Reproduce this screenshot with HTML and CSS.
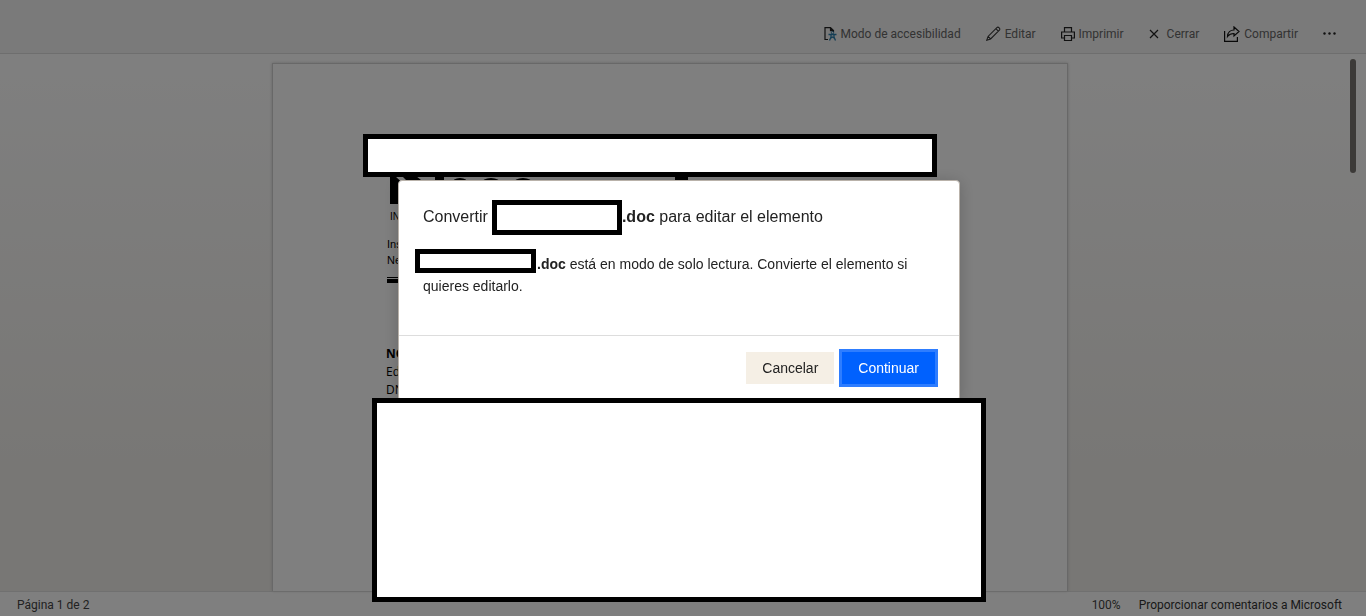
FILE: index.html
```
<!DOCTYPE html>
<html lang="es">
<head>
<meta charset="utf-8">
<meta name="viewport" content="width=device-width, initial-scale=1">
<title>Documento</title>
<link rel="stylesheet" href="styles.css">
</head>
<body>
<div class="viewer">
  <header class="toolbar">
    <button class="tool" type="button">
      <svg width="13" height="14" viewBox="0 0 13 14" fill="none"><path d="M4 12.500H1V.6h5.500L9.500 3.500V5M6.500.6v3h3" stroke="#222" stroke-width="1.200"/><circle cx="8.500" cy="5.700" r="1.200" stroke="#2b7dab"/><path d="M4.500 7.500h8M7 8v2L5.500 13.500M10 8v2l1.500 3.500M7 11l1.500-1 1.500 1" stroke="#2b7dab" stroke-width="1.300"/></svg>
      Modo de accesibilidad
    </button>
    <button class="tool" type="button">
      <svg width="15" height="15" viewBox="0 0 16 16" fill="none" stroke="#333" stroke-width="1.100"><path d="M.8 15.200l1.400-4.100 9.400-9.400c1.500-1.500 4.200 1.200 2.700 2.700l-9.400 9.400zM10.500 2.800l2.700 2.700M2.200 11.100l2.700 2.700"/></svg>
      Editar
    </button>
    <button class="tool" type="button">
      <svg width="14" height="14" viewBox="0 0 14 14" fill="none" stroke="#222" stroke-width="1.200"><path d="M3.500 5V.6h7V5M3.500 11H.6V5h12.800v6h-2.900M3.500 8.500h7v5h-7z"/></svg>
      Imprimir
    </button>
    <button class="tool" type="button">
      <svg class="close" width="10" height="10" viewBox="0 0 10 10" fill="none" stroke="#222" stroke-width="1.200"><path d="M1 1l8 8M9 1L1 9"/></svg>
      Cerrar
    </button>
    <button class="tool" type="button">
      <svg width="16" height="16" viewBox="0 0 16 16" fill="none" stroke="#111" stroke-width="1.200"><path d="M.6 5v10.400h12.800V11M10 1l5 4.500-5 4.500V7.500C7 7.500 5 8.500 3.500 10.500c.2-4 3-6.500 6.500-6.500z"/></svg>
      Compartir
    </button>
    <button class="tool more" type="button" aria-label="Más opciones">
      <svg width="13" height="3" viewBox="0 0 13 3" fill="#222"><circle cx="1.500" cy="1.500" r="1.200"/><circle cx="6.500" cy="1.500" r="1.200"/><circle cx="11.500" cy="1.500" r="1.200"/></svg>
    </button>
  </header>

  <main class="canvas">
    <article class="sheet">
      <svg class="logo" width="298" height="28" viewBox="0 0 298 28"><path d="M0 0h5l13 12V28H0zM12 0h14l10 8H20zM45 0h9v8h-9zM61 8q2-6 9-6t9 6zM90 8q3-6 11-6t11 6zM122 8q3-6 11-6t11 6zM285 0h13v8h-13z"/></svg>
      <p class="institution">IN</p>
      <p class="issuer">Ins<br>Ne</p>
      <hr class="rule">
      <p class="person"><b>NO</b><br>Ed<br>DN</p>
    </article>
    <div class="thumb"></div>
  </main>

  <footer class="status">
    <span>Página 1 de 2</span>
    <span class="zoom">100%</span>
    <a class="feedback" href="#">Proporcionar comentarios a Microsoft</a>
  </footer>
</div>

<div class="overlay">
  <section class="dialog" role="dialog" aria-modal="true" aria-labelledby="dialog-title">
    <div class="content">
      <h1 class="title" id="dialog-title"><span class="words">Convertir</span><span class="mask mask-title"></span><span class="words"><b>.doc</b> para editar el elemento</span></h1>
      <p class="message"><span class="mask mask-name"></span><b>.doc</b> está en modo de solo lectura. Convierte el elemento si quieres editarlo.</p>
    </div>
    <div class="actions">
      <button class="btn" type="button">Cancelar</button>
      <button class="btn primary" type="button">Continuar</button>
    </div>
    <div class="mask mask-top"></div>
    <div class="mask mask-bottom"></div>
  </section>
</div>
</body>
</html>
```
FILE: styles.css
```
* {
  box-sizing: border-box;
}

body {
  margin: 0;
  font-family: Roboto, "Open Sans", sans-serif;
  font-size: 12px;
  color: #444;
}

.viewer {
  display: flex;
  flex-direction: column;
  height: 100vh;
  overflow: hidden;
}

.toolbar {
  display: flex;
  align-items: center;
  justify-content: flex-end;
  gap: 25px;
  padding: 20px 30px 6px;
  min-height: 54px;
  background: #f4f4f4;
  border-bottom: 1px solid #dcdcdc;
  box-shadow: 0 1px 2px #d8d8d8;
}

.tool {
  display: flex;
  align-items: center;
  gap: 4px;
  padding: 0;
  border: 0;
  background: none;
  font: inherit;
  line-height: 16px;
  color: #666;
}

.close {
  margin-right: 4px;
}

.canvas {
  display: flex;
  justify-content: center;
  position: relative;
  flex: 1;
  min-height: 0;
  padding: 9px 26px 0 0;
  background: linear-gradient(#ffffff, #f0eeea 80%);
}

.sheet {
  width: 796px;
  padding: 112px 113px 0;
  background: #fff;
  border: 1px solid #d0d0d0;
  border-bottom: 0;
  box-shadow: 0 0 3px #ccc;
  color: #000;
}

.sheet p {
  margin: 0;
}

.logo {
  display: block;
  margin-left: 4px;
}

.institution {
  padding: 5px 0 0 4px;
  font: 10px/16px "Liberation Sans", Arial, sans-serif;
}

.issuer {
  padding: 11px 0 0 1px;
  font: 11px/16px "Liberation Sans", Arial, sans-serif;
}

.rule {
  height: 6px;
  margin: 9px 0 0 1px;
  border: solid #000;
  border-width: 1px 0 4px;
}

.person {
  padding-top: 62px;
  font-family: "Open Sans", "Noto Sans", sans-serif;
  line-height: 18px;
}

.thumb {
  position: absolute;
  top: 5px;
  right: 10px;
  width: 6px;
  height: 114px;
  border-radius: 3px;
  background: #787470;
}

.status {
  display: flex;
  align-items: center;
  gap: 18px;
  padding: 5px 24px 3px 17px;
  border-top: 1px solid #e0e0e0;
  background: #fff;
  line-height: 16px;
}

.zoom {
  margin-left: auto;
}

.feedback {
  color: #333;
  text-decoration: none;
}

.overlay {
  position: fixed;
  inset: 0;
  display: flex;
  justify-content: center;
  align-items: flex-start;
  padding: 180px 8px 0 0;
  background: rgba(0, 0, 0, 0.5);
}

.dialog {
  position: relative;
  width: 562px;
  background: #fff;
  border: 1px solid #b9b2aa;
  border-radius: 4px;
  box-shadow: 0 2px 16px rgba(0, 0, 0, 0.2);
  color: #222;
  font: 14px/22px "Liberation Sans", Arial, sans-serif;
}

.content {
  padding: 19px 24px 38px;
}

.title {
  display: flex;
  align-items: center;
  margin: 0;
  font-size: 16px;
  font-weight: 400;
}

.words {
  padding-bottom: 2px;
}

.message {
  margin: 18px 0 0;
}

.mask {
  border: 5px solid #000;
  background: #fff;
}

.mask-title {
  width: 130px;
  height: 35px;
  margin-left: 4px;
}

.mask-name {
  display: inline-block;
  width: 121px;
  height: 24px;
  margin: -8px 1px 0 -8px;
  vertical-align: middle;
}

.mask-top {
  position: absolute;
  top: -47px;
  left: -36px;
  width: 574px;
  height: 43px;
}

.mask-bottom {
  position: absolute;
  top: 217px;
  left: -27px;
  width: 614px;
  height: 204px;
}

.actions {
  display: flex;
  justify-content: flex-end;
  gap: 8px;
  padding: 16px 24px;
  border-top: 1px solid #ddd;
}

.btn {
  height: 32px;
  padding: 0 16px;
  border: 0;
  background: #f5efe5;
  font: inherit;
  color: #222;
}

.primary {
  background: #0061fe;
  box-shadow: 0 0 0 3px #2e7dff;
  color: #fff;
}
```
